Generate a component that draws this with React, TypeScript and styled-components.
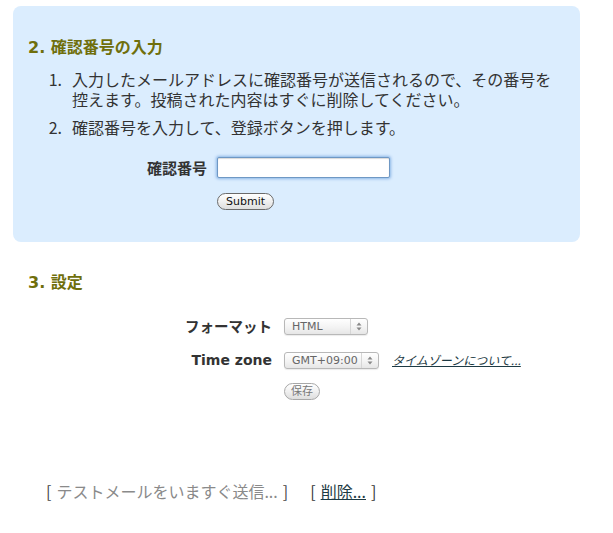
import styled, { createGlobalStyle } from 'styled-components';

const GlobalStyle = createGlobalStyle`
  body {
    margin: 0;
    background: #fff;
    color: #333;
    font-family: "Noto Sans CJK JP", "DejaVu Sans", sans-serif;
    line-height: 20px;
  }
`;

const StyledPage = styled.div`
  width: 613px;
  padding-top: 6px;
`;

const StyledPanel = styled.section`
  margin: 0 33px 0 13px;
  padding: 30px 15px 32px;
  background: #dbedfe;
  border-radius: 8px;
`;

const StyledSection = styled.section`
  margin: 29px 33px 0 13px;
  padding: 0 15px;
`;

const StyledHeading = styled.h2`
  margin: 0;
  font-size: 16px;
  line-height: 20px;
  font-weight: bold;
  color: #6f6f0c;
`;

const StyledNum = styled.span`
  font-family: "DejaVu Sans", sans-serif;
  margin-right: 2px;
`;

const StyledList = styled.div`
  margin-top: 11px;
  display: flex;
  flex-direction: column;
  gap: 8px;
`;

const StyledItem = styled.div`
  display: flex;
  font-size: 16px;
  line-height: 20px;
`;

const StyledItemText = styled.div`
  line-height: 20px;
`;

const StyledMarker = styled.div`
  flex: 0 0 44px;
  text-align: right;
  padding-right: 10px;
  box-sizing: border-box;
  font-size: 16px;
  line-height: 20px;
`;

const StyledForm = styled.div<{ $label: number; $gap: number; $top: number }>`
  margin-top: ${(p) => p.$top}px;
  display: grid;
  grid-template-columns: ${(p) => p.$label}px auto;
  column-gap: ${(p) => p.$gap}px;
  align-items: center;
  justify-items: start;
  line-height: 20px;
`;

const StyledLabel = styled.label<{ $size: number; $latin?: boolean }>`
  justify-self: end;
  font-weight: bold;
  font-family: ${(p) =>
    p.$latin ? '"DejaVu Sans", sans-serif' : '"Noto Sans CJK JP", sans-serif'};
  font-size: ${(p) => p.$size}px;
  line-height: 20px;
  color: #333;
`;

const StyledCell = styled.div`
  display: flex;
  align-items: center;
  gap: 13px;
  height: 20px;
`;

const StyledInput = styled.input`
  box-sizing: border-box;
  width: 173px;
  height: 21px;
  margin: 0;
  border: 1px solid #6f98c4;
  border-radius: 2px;
  background: #fff;
  box-shadow: 0 0 3px 1px #8cb6e6, inset 0 1px 1px rgba(0, 0, 0, 0.15);
  outline: none;
`;

const StyledButtonRow = styled.div<{ $top: number }>`
  grid-column: 2;
  margin-top: ${(p) => p.$top}px;
  display: flex;
  line-height: 17px;
`;

const StyledButton = styled.button<{ $muted?: boolean }>`
  box-sizing: border-box;
  height: 17px;
  margin: 0;
  padding: 0 ${(p) => (p.$muted ? 6 : 8)}px;
  border: 1px solid ${(p) => (p.$muted ? '#a8a8a8' : '#6a6a6a')};
  border-radius: 9px;
  background: linear-gradient(#ffffff, #f0f0f0 50%, #dedede);
  color: ${(p) => (p.$muted ? '#777' : '#111')};
  font-family: "DejaVu Sans", "Noto Sans CJK JP", sans-serif;
  font-size: 11px;
  line-height: 15px;
`;

const StyledSelect = styled.div<{ $width: number }>`
  box-sizing: border-box;
  width: ${(p) => p.$width}px;
  height: 17px;
  display: flex;
  align-items: stretch;
  border: 1px solid #b8b8b8;
  border-radius: 3px;
  background: linear-gradient(#ffffff, #f2f2f2 60%, #e6e6e6);
  box-shadow: 0 1px 1px rgba(0, 0, 0, 0.08);
  font-family: "DejaVu Sans", sans-serif;
  font-size: 11px;
  color: #666;
`;

const StyledSelectText = styled.span`
  flex: 1;
  padding-left: 7px;
  line-height: 15px;
`;

const StyledArrows = styled.span`
  width: 16px;
  border-left: 1px solid #d6d6d6;
  display: flex;
  align-items: center;
  justify-content: center;
`;

const StyledLink = styled.a`
  color: #1d3a44;
  text-decoration: underline;
  cursor: pointer;
`;

const StyledTzLink = styled(StyledLink)`
  font-size: 12px;
  line-height: 16px;
  font-style: italic;
`;

const StyledRowGap = styled.div`
  grid-column: 1 / span 2;
  height: 14px;
`;

const StyledFooter = styled.div`
  margin: 80px 0 0 46px;
  display: flex;
  gap: 22px;
  font-size: 16px;
  line-height: 22px;
`;

const StyledBracket = styled.span<{ $gray?: boolean }>`
  display: flex;
  gap: 5px;
  color: ${(p) => (p.$gray ? '#8a8a8a' : '#333')};
  & > b {
    font-weight: normal;
    color: #444;
  }
`;

const Arrows = () => (
  <svg width="6" height="9" viewBox="0 0 6 9">
    <path d="M3 0.5 L5.5 3.5 H0.5 Z" fill="#888" />
    <path d="M3 8.5 L5.5 5.5 H0.5 Z" fill="#888" />
  </svg>
);

const Select = ({ value, width }: { value: string; width: number }) => (
  <StyledSelect $width={width}>
    <StyledSelectText>{value}</StyledSelectText>
    <StyledArrows>
      <Arrows />
    </StyledArrows>
  </StyledSelect>
);

const App = () => (
  <StyledPage>
    <GlobalStyle />
    <StyledPanel>
      <StyledHeading>
        <StyledNum>2.</StyledNum> 確認番号の入力
      </StyledHeading>
      <StyledList>
        <StyledItem>
          <StyledMarker>1.</StyledMarker>
          <StyledItemText>
            入力したメールアドレスに確認番号が送信されるので、その番号を
            <br />
            控えます。投稿された内容はすぐに削除してください。
          </StyledItemText>
        </StyledItem>
        <StyledItem>
          <StyledMarker>2.</StyledMarker>
          <StyledItemText>確認番号を入力して、登録ボタンを押します。</StyledItemText>
        </StyledItem>
      </StyledList>
      <StyledForm $label={179} $gap={10} $top={20}>
        <StyledLabel $size={15}>確認番号</StyledLabel>
        <StyledInput type="text" />
        <StyledButtonRow $top={15}>
          <StyledButton>Submit</StyledButton>
        </StyledButtonRow>
      </StyledForm>
    </StyledPanel>

    <StyledSection>
      <StyledHeading>
        <StyledNum>3.</StyledNum> 設定
      </StyledHeading>
      <StyledForm $label={244} $gap={12} $top={23}>
        <StyledLabel $size={14.5}>フォーマット</StyledLabel>
        <Select value="HTML" width={84} />
        <StyledRowGap />
        <StyledLabel $size={14} $latin>
          Time zone
        </StyledLabel>
        <StyledCell>
          <Select value="GMT+09:00" width={95} />
          <StyledTzLink>タイムゾーンについて...</StyledTzLink>
        </StyledCell>
        <StyledButtonRow $top={13}>
          <StyledButton $muted>保存</StyledButton>
        </StyledButtonRow>
      </StyledForm>
    </StyledSection>

    <StyledFooter>
      <StyledBracket $gray>
        <b>[</b>
        <span>テストメールをいますぐ送信...</span>
        <b>]</b>
      </StyledBracket>
      <StyledBracket>
        <span>[</span>
        <StyledLink>削除...</StyledLink>
        <span>]</span>
      </StyledBracket>
    </StyledFooter>
  </StyledPage>
);

export default App;
